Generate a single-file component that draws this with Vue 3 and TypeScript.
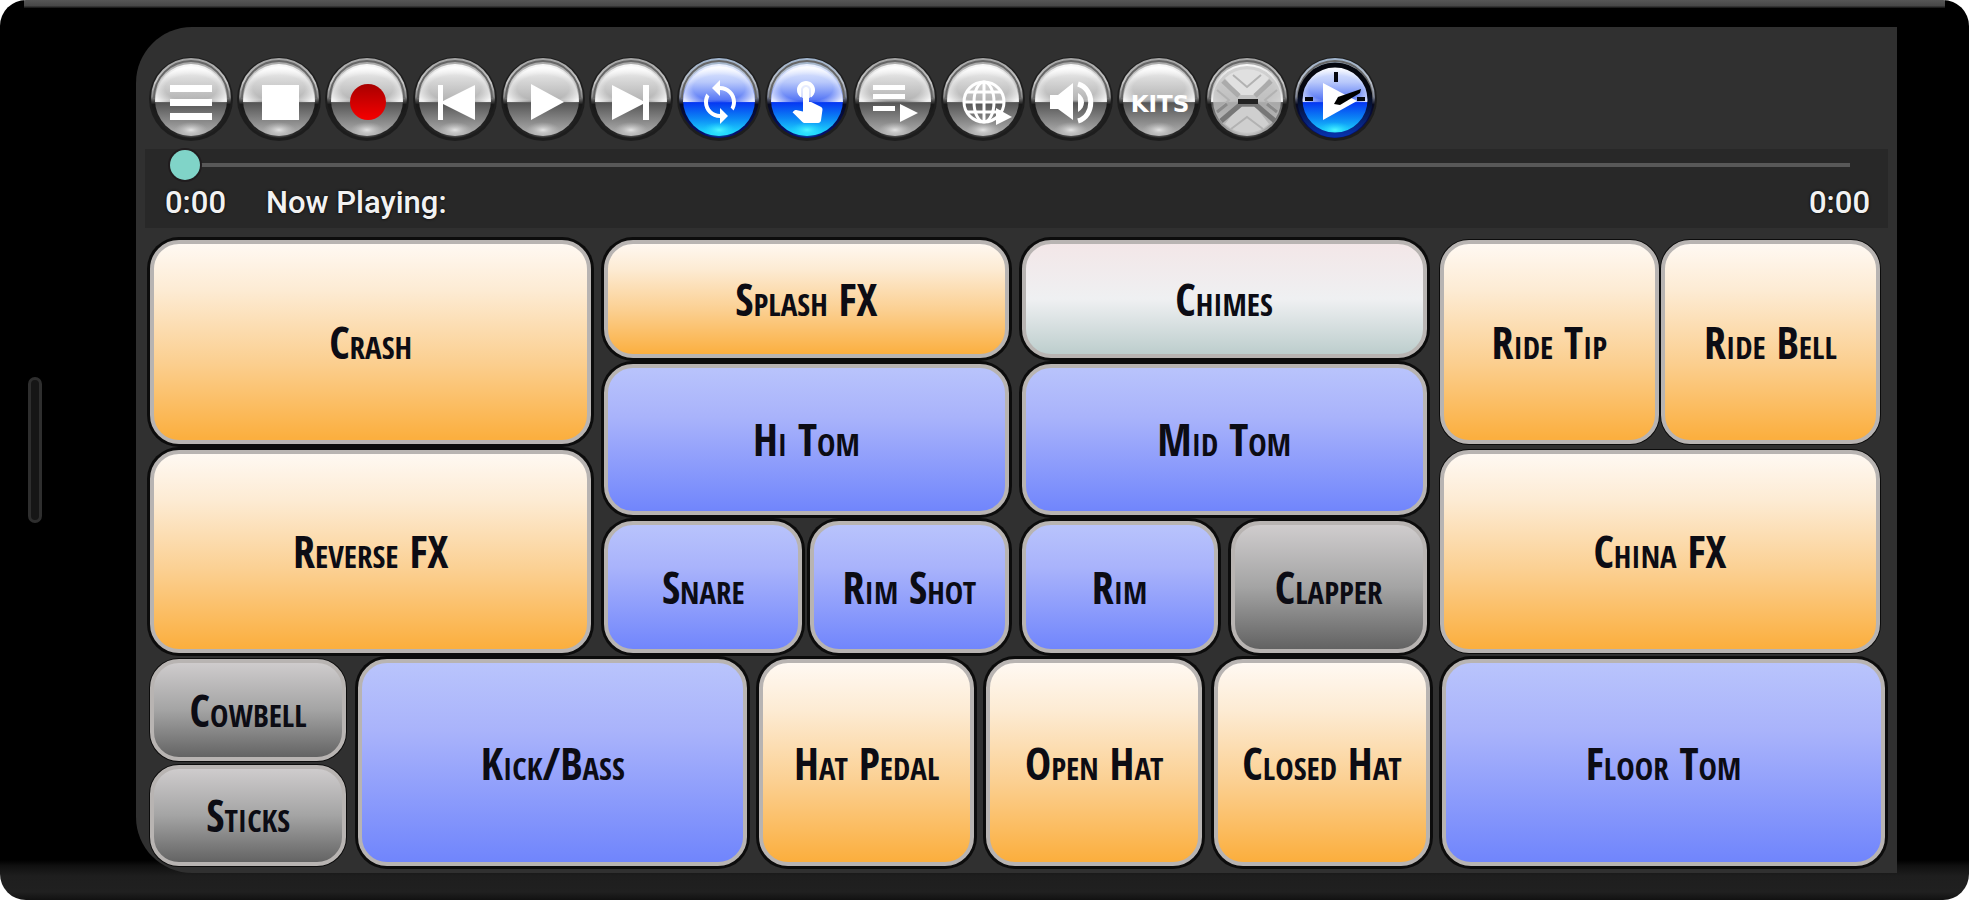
<script setup lang="ts">
import { ref } from 'vue'

type Tone = 'orange' | 'blue' | 'gray' | 'silver'
interface Pad { name: string; tone: Tone; area: string }
interface Tool { id: string; label: string; active?: boolean }

const tools: Tool[] = [
  { id: 'menu', label: 'Menu' },
  { id: 'stop', label: 'Stop' },
  { id: 'record', label: 'Record' },
  { id: 'prev', label: 'Previous' },
  { id: 'play', label: 'Play' },
  { id: 'next', label: 'Next' },
  { id: 'loop', label: 'Loop', active: true },
  { id: 'touch', label: 'Touch', active: true },
  { id: 'queue', label: 'Playlist' },
  { id: 'globe', label: 'Online songs' },
  { id: 'volume', label: 'Volume' },
  { id: 'kits', label: 'Kits' },
  { id: 'mixer', label: 'Layout' },
  { id: 'timer', label: 'Metronome', active: true },
]

const columns: { name: string; pads: Pad[] }[] = [
  { name: 'left', pads: [
    { name: 'Crash', tone: 'orange', area: 'a' },
    { name: 'Reverse FX', tone: 'orange', area: 'b' },
  ] },
  { name: 'mid-left', pads: [
    { name: 'Splash FX', tone: 'orange', area: 'a' },
    { name: 'Hi Tom', tone: 'blue', area: 'b' },
    { name: 'Snare', tone: 'blue', area: 'c' },
    { name: 'Rim Shot', tone: 'blue', area: 'd' },
  ] },
  { name: 'mid-right', pads: [
    { name: 'Chimes', tone: 'silver', area: 'a' },
    { name: 'Mid Tom', tone: 'blue', area: 'b' },
    { name: 'Rim', tone: 'blue', area: 'c' },
    { name: 'Clapper', tone: 'gray', area: 'd' },
  ] },
  { name: 'right', pads: [
    { name: 'Ride Tip', tone: 'orange', area: 'a' },
    { name: 'Ride Bell', tone: 'orange', area: 'b' },
    { name: 'China FX', tone: 'orange', area: 'c' },
  ] },
]

const lower: Pad[] = [
  { name: 'Cowbell', tone: 'gray', area: 'cow' },
  { name: 'Sticks', tone: 'gray', area: 'sticks' },
  { name: 'Kick/Bass', tone: 'blue', area: 'kick' },
  { name: 'Hat Pedal', tone: 'orange', area: 'pedal' },
  { name: 'Open Hat', tone: 'orange', area: 'open' },
  { name: 'Closed Hat', tone: 'orange', area: 'closed' },
  { name: 'Floor Tom', tone: 'blue', area: 'floor' },
]

const position = ref(0)
</script>

<template>
  <div class="phone">
    <div class="speaker"></div>
    <main class="screen">
      <svg class="defs" aria-hidden="true">
        <defs>
          <linearGradient id="rim" x1="0" y1="0" x2="0" y2="1">
            <stop offset="0" stop-color="#a2a2a2" /><stop offset=".3" stop-color="#c8c8c8" />
            <stop offset=".48" stop-color="#8a8a8a" /><stop offset=".58" stop-color="#181818" /><stop offset="1" stop-color="#262626" />
          </linearGradient>
          <linearGradient id="rimBlue" x1="0" y1="0" x2="0" y2="1">
            <stop offset="0" stop-color="#9fb3cc" /><stop offset=".3" stop-color="#b9bfc9" />
            <stop offset=".48" stop-color="#808697" /><stop offset=".58" stop-color="#080a20" /><stop offset="1" stop-color="#04107a" />
          </linearGradient>
          <linearGradient id="face" x1="0" y1="0" x2="0" y2="1">
            <stop offset="0" stop-color="#fafafa" /><stop offset=".2" stop-color="#dadada" /><stop offset=".5" stop-color="#b4b4b4" />
            <stop offset=".54" stop-color="#555" /><stop offset=".75" stop-color="#808080" /><stop offset="1" stop-color="#b4b4b4" />
          </linearGradient>
          <linearGradient id="faceBlue" x1="0" y1="0" x2="0" y2="1">
            <stop offset="0" stop-color="#eef3ff" /><stop offset=".25" stop-color="#b9c9fb" /><stop offset=".5" stop-color="#5677f5" />
            <stop offset=".54" stop-color="#0638f2" /><stop offset=".75" stop-color="#0b84f5" /><stop offset="1" stop-color="#22e8ff" />
          </linearGradient>
          <radialGradient id="edge" cx=".5" cy=".62" r=".6">
            <stop offset=".6" stop-color="#fff" stop-opacity="0" /><stop offset=".95" stop-color="#fff" stop-opacity=".85" />
          </radialGradient>
          <radialGradient id="glow">
            <stop offset="0" stop-color="#e4e4e4" /><stop offset="1" stop-color="#bbb" stop-opacity="0" />
          </radialGradient>
          <radialGradient id="glowBlue">
            <stop offset="0" stop-color="#4ff6ff" /><stop offset="1" stop-color="#1ad0ff" stop-opacity="0" />
          </radialGradient>
          <linearGradient id="red" x1="0" y1="0" x2="0" y2="1">
            <stop offset="0" stop-color="#a80000" /><stop offset="1" stop-color="#f60000" />
          </linearGradient>
          <linearGradient id="ring" x1="0" y1="0" x2="0" y2="1">
            <stop offset=".4" stop-color="#05070f" /><stop offset="1" stop-color="#0630a8" />
          </linearGradient>
        </defs>
      </svg>

      <nav class="toolbar" aria-label="Player controls">
        <button v-for="t in tools" :key="t.id" type="button" class="tool" :aria-label="t.label">
          <svg viewBox="0 0 88 88" aria-hidden="true">
            <circle cx="44" cy="45" r="42" fill="#161616" opacity=".7" />
            <circle cx="44" cy="44" r="40" :fill="t.active ? 'url(#rimBlue)' : 'url(#rim)'" />
            <path d="M7 44a37 37 0 0 1 74 0" fill="none" stroke="#666" stroke-width="2" />
            <circle cx="44" cy="46" r="36" :fill="t.active ? 'url(#faceBlue)' : 'url(#face)'" />
            <path d="M8 48a36 36 0 0 1 72 0z" fill="url(#edge)" />
            <ellipse cx="44" cy="76" rx="17" ry="8" :fill="t.active ? 'url(#glowBlue)' : 'url(#glow)'" />

            <path v-if="t.id === 'menu'" d="M23 31h42v7H23zM23 45h42v7H23zM23 59h42v7H23z" fill="#fff" />
            <path v-else-if="t.id === 'stop'" d="M27 31h37v35H27z" fill="#fff" />
            <circle v-else-if="t.id === 'record'" cx="45" cy="48" r="18" fill="url(#red)" />
            <path v-else-if="t.id === 'prev'" d="M27 31h5v16l32-16v35L32 50v16h-5z" fill="#fff" />
            <path v-else-if="t.id === 'play'" d="M32 30l33 18-33 18z" fill="#fff" />
            <path v-else-if="t.id === 'next'" d="M25 31l31 16V31h6v35h-6V50L25 66z" fill="#fff" />
            <path v-else-if="t.id === 'loop'" transform="translate(21 24) scale(2)" fill="#fff" d="M12 4V1L8 5l4 4V6c3.31 0 6 2.69 6 6 0 1.01-.25 1.97-.7 2.8l1.46 1.46C19.54 15.03 20 13.57 20 12c0-4.42-3.58-8-8-8zm0 14c-3.31 0-6-2.69-6-6 0-1.01.25-1.97.7-2.8L5.24 7.74C4.46 8.97 4 10.43 4 12c0 4.42 3.58 8 8 8v3l4-4-4-4v3z" />
            <g v-else-if="t.id === 'touch'" transform="translate(20 21) scale(2)" fill="#fff">
              <circle cx="11.5" cy="7.5" r="4.3" opacity=".75" />
              <path d="M9 11.24V7.5C9 6.12 10.12 5 11.5 5S14 6.12 14 7.5v3.74c1.21-.81 2-2.18 2-3.74C16 5.01 13.99 3 11.5 3S7 5.01 7 7.5c0 1.56.79 2.93 2 3.74zm9.84 4.63l-4.54-2.26c-.17-.07-.35-.11-.54-.11H13v-6c0-.83-.67-1.5-1.5-1.5S10 6.67 10 7.5v10.74l-3.43-.72c-.08-.01-.15-.03-.24-.03-.31 0-.59.13-.79.33l-.79.8 4.94 4.94c.27.27.65.44 1.06.44h6.79c.75 0 1.33-.55 1.44-1.28l.75-5.27c.01-.07.02-.14.02-.2 0-.62-.38-1.16-.91-1.38z" />
            </g>
            <path v-else-if="t.id === 'queue'" d="M22 31h32v5H22zM22 40h32v5H22zM22 52h22v5H22zM49 50l18 9-18 9z" fill="#fff" />
            <g v-else-if="t.id === 'globe'" fill="none" stroke="#fff" stroke-width="3">
              <circle cx="45" cy="48" r="20" />
              <ellipse cx="45" cy="48" rx="10" ry="20" />
              <path d="M45 28v40M25 48h40M28 38h34M28 58h34" />
              <path d="M57 54l16 9-16 8z" fill="#fff" stroke="none" />
            </g>
            <g v-else-if="t.id === 'volume'">
              <path d="M23 41h8l15-12v37L31 55h-8z" fill="#fff" />
              <path d="M51 39c8 5 8 14 0 19z" fill="#fff" />
              <path d="M51 30c17 5 17 32 0 37" fill="none" stroke="#fff" stroke-width="5" />
            </g>
            <text v-else-if="t.id === 'kits'" x="45" y="58" text-anchor="middle" class="kits">KITS</text>
            <g v-else-if="t.id === 'mixer'">
              <circle cx="44" cy="46" r="34" fill="#c4c4c4" opacity=".75" />
              <path d="M22 24a32 32 0 0 1 44 0L53 41H35z" fill="#e0e0e0" />
              <path d="M22 70a32 32 0 0 0 44 0L53 53H35z" fill="#cfcfcf" />
              <path d="M20 27l16 15M68 27L52 42" stroke="#ababab" stroke-width="5" />
              <path d="M18 67l20-17h14l20 17" fill="none" stroke="#777" stroke-width="5" />
              <path d="M14 36l12 10-12 11M74 36L62 46l12 11M30 21l14 12 14-12M28 75l16-12 16 12" fill="none" stroke="#b2b2b2" stroke-width="2" />
              <path d="M14 58l10-8M74 58l-10-8" stroke="#8a8a8a" stroke-width="3" />
              <path d="M35 45h20v5H35z" fill="#222" />
            </g>
            <g v-else>
              <circle cx="44" cy="46" r="35" fill="none" stroke="url(#ring)" stroke-width="5" />
              <path d="M45 18v10M14 45h8M74 45h-8" stroke="#05070f" stroke-width="4" />
              <path d="M32 29l34 18-34 19z" fill="#fff" />
              <path d="M43 50l4-7 23-8-1 4-20 12z" fill="#000" />
            </g>
          </svg>
        </button>
      </nav>

      <section class="player">
        <input v-model="position" class="seek" type="range" min="0" max="100" aria-label="Song position" />
        <div class="info">
          <span>0:00</span>
          <span>Now Playing:</span>
          <span class="total">0:00</span>
        </div>
      </section>

      <section class="kit" aria-label="Drum pads">
        <div class="upper">
          <div v-for="c in columns" :key="c.name" class="column" :class="c.name">
            <button v-for="p in c.pads" :key="p.name" type="button" class="pad" :class="[p.tone, p.area]">{{ p.name }}</button>
          </div>
        </div>
        <div class="lower">
          <button v-for="p in lower" :key="p.name" type="button" class="pad" :class="[p.tone, p.area]">{{ p.name }}</button>
        </div>
      </section>
    </main>
  </div>
</template>

<style>
body {
  background: #fff;
}
</style>

<style scoped>
.phone {
  box-sizing: border-box;
  min-height: 100vh;
  display: flex;
  align-items: stretch;
  padding: 27px 72px 27px 28px;
  border-radius: 26px;
  background:
    linear-gradient(#565656, #484848 70%, #111) top center / calc(100% - 48px) 8px no-repeat,
    linear-gradient(to top, #111 0, #202020 8px, #1e1e1e 24px, #101010 34px, #000 40px);
}
.speaker {
  box-sizing: border-box;
  flex: none;
  align-self: center;
  width: 14px;
  height: 146px;
  margin-right: 94px;
  border: 3px solid #2e2e2e;
  border-radius: 7px;
  background: #161616;
}
.screen {
  flex: 1;
  min-width: 0;
  display: flex;
  flex-direction: column;
  border-radius: 56px 0 0 56px;
  background: #303030;
}
.defs {
  position: absolute;
  width: 0;
  height: 0;
}
.toolbar {
  display: flex;
  padding: 27px 11px 7px;
}
.tool {
  flex: 0 1 88px;
  min-width: 0;
  padding: 0;
  border: 0;
  background: none;
}
.tool svg {
  display: block;
  width: 100%;
}
.kits {
  font: bold 23px "DejaVu Sans", sans-serif;
  fill: #fff;
}
.player {
  margin: 0 9px;
  padding: 0 18px 0 20px;
  background: #282828;
}
.seek {
  appearance: none;
  display: block;
  box-sizing: border-box;
  width: calc(100% - 25px);
  height: 32px;
  margin: 0;
  margin-left: 5px;
  background: linear-gradient(#585858, #585858) center / 100% 4px no-repeat;
}
.seek::-webkit-slider-thumb {
  appearance: none;
  width: 30px;
  height: 30px;
  border-radius: 50%;
  background: #80d4c8;
  box-shadow: 0 0 0 2px #201c1e;
}
.info {
  display: flex;
  gap: 40px;
  padding: 2px 0 5px;
  font: 500 31px/40px Roboto, sans-serif;
  color: #f2f2f2;
  text-shadow: 0 0 3px #000;
}
.total {
  margin-left: auto;
}
.kit {
  flex: 1;
  display: flex;
  flex-direction: column;
  gap: 6px;
  padding: 12px 12px 7px 14px;
}
.upper {
  flex: 2 1 0;
  display: grid;
  grid-template-columns: 441fr 404fr 405fr 440fr;
  gap: 13px;
  margin-right: 5px;
}
.column {
  display: grid;
  gap: 6px;
}
.left {
  grid-template-rows: 1fr 1fr;
}
.mid-left,
.mid-right {
  grid-template: "a a" 118fr "b b" 151fr "c d" 133fr / 1fr 1fr;
  column-gap: 8px;
}
.mid-right {
  column-gap: 13px;
}
.right {
  grid-template: "a b" 1fr "c c" 1fr / 1fr 1fr;
  column-gap: 2px;
}
.mid-left .a, .mid-right .a { grid-area: a; }
.mid-left .b, .mid-right .b { grid-area: b; }
.right .c { grid-column: 1 / -1; }
.lower {
  flex: 1 1 0;
  display: grid;
  grid-template:
    "cow kick pedal open closed floor" 1fr
    "sticks kick pedal open closed floor" 1fr / 196fr 388fr 215fr 215fr 216fr 442fr;
  gap: 4px 12px;
}
.cow { grid-area: cow; }
.sticks { grid-area: sticks; }
.kick { grid-area: kick; }
.pedal { grid-area: pedal; }
.open { grid-area: open; }
.closed { grid-area: closed; }
.floor { grid-area: floor; }
.pad {
  min-width: 0;
  padding: 0;
  border: 4px solid #b8b4b2;
  border-radius: 29px;
  background-origin: border-box;
  box-shadow: 0 0 0 3px #0c0c0c;
  font: 44px/1 "Open Sans Condensed", "Liberation Sans Narrow", Roboto, sans-serif;
  font-variant-caps: small-caps;
  white-space: nowrap;
  color: #0c0c14;
}
.right .pad,
.cow,
.sticks {
  box-shadow: 0 0 0 1px #0c0c0c;
}
.orange {
  background-image: linear-gradient(#fffaf5, #fdebd3 25%, #fbcf90 60%, #fbaf3f 97%);
}
.blue {
  background-image: linear-gradient(#bac5fc, #a9b3fb 35%, #7085fc 98%);
}
.gray {
  background-image: linear-gradient(#d2cfd0, #a4a4a4 50%, #5e5e5e);
}
.silver {
  background-image: linear-gradient(#f3e6e7, #eff0f2 50%, #b9cbca);
}
</style>
